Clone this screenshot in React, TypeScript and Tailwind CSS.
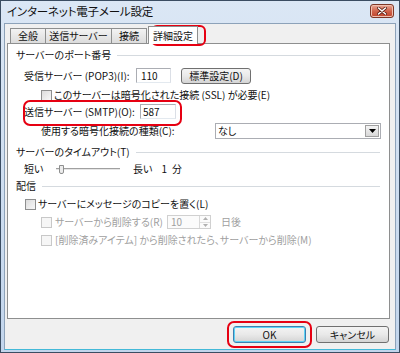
import React from "react";

const font = "[font-family:'Noto_Sans_CJK_JP','Noto_Sans',sans-serif] [font-feature-settings:'palt']";

function Checkbox({ disabled = false }: { disabled?: boolean }) {
  return (
    <span
      className={`inline-block h-[11px] w-[11px] shrink-0 border ${
        disabled
          ? "border-[#c8c8c8] bg-[#f6f6f6]"
          : "border-[#8e8f8f] bg-gradient-to-br from-[#dcdcdc] to-[#f8f8f8]"
      }`}
    />
  );
}

function GroupHeader({ label }: { label: string }) {
  return (
    <div className="flex h-[14px] items-center pl-[8px] pr-[9px]">
      <span className="whitespace-nowrap">{label}</span>
      <div className="ml-[6px] h-px flex-1 bg-[#d5dadf]" />
    </div>
  );
}

function Button({ label, primary = false }: { label: string; primary?: boolean }) {
  return (
    <div
      className={`flex h-[17px] w-[73px] items-center justify-center rounded-[3px] border bg-gradient-to-b from-[#f4f4f4] via-[#e9e9e9] to-[#d4d4d4] ${
        primary ? "border-[#3c7fb1] shadow-[inset_0_0_0_1px_#5fd3f5]" : "border-[#707070]"
      }`}
    >
      {label}
    </div>
  );
}

export default function App() {
  return (
    <div
      className={`relative flex h-[353px] w-[400px] flex-col overflow-hidden border border-[#3b4d62] bg-gradient-to-b from-[#dbe7f5] to-[#c2d5ec] text-[10px] leading-none text-[#111] ${font}`}
    >
      {/* title bar */}
      <div className="flex h-[22px] shrink-0 items-center justify-between pl-[6px] pr-[5px]">
        <span className="text-[11.5px] tracking-[-0.2px]">インターネット電子メール設定</span>
        <div className="mt-[-3px] flex h-[14px] w-[24px] items-center justify-center rounded-[3px] border border-[#7d3626] bg-gradient-to-b from-[#e8a898] via-[#d0644c] to-[#c0432c] shadow-[inset_0_0_0_1px_#f0c0b0]">
          <svg width="10" height="8" viewBox="0 0 10 8">
            <path d="M1.5 1 L8.5 7 M8.5 1 L1.5 7" stroke="#5a1d12" strokeWidth="3" strokeLinecap="round" />
            <path d="M1.5 1 L8.5 7 M8.5 1 L1.5 7" stroke="#ffffff" strokeWidth="1.6" strokeLinecap="round" />
          </svg>
        </div>
      </div>

      {/* client area */}
      <div className="mx-[3px] mb-[2px] flex flex-1 flex-col border border-[#8da2b9] border-b-[#43b9d8] bg-[#f0f0f0]">
        {/* tabs */}
        <div className="flex h-[19px] items-end pl-[5px]">
          <div className="flex h-[15px] w-[36px] items-center justify-center border border-b-0 border-[#8e8f8f] bg-gradient-to-b from-[#f3f3f3] to-[#dcdcdc]">全般</div>
          <div className="flex h-[15px] w-[66px] items-center justify-center border border-b-0 border-l-0 border-[#8e8f8f] bg-gradient-to-b from-[#f3f3f3] to-[#dcdcdc]">送信サーバー</div>
          <div className="flex h-[15px] w-[35px] items-center justify-center border border-b-0 border-l-0 border-[#8e8f8f] bg-gradient-to-b from-[#f3f3f3] to-[#dcdcdc]">接続</div>
          <div className="relative z-10 mb-[-1px] ml-[1px] flex h-[18px] w-[50px] items-center justify-center border border-b-0 border-[#8e8f8f] bg-white">詳細設定</div>
        </div>

        {/* panel */}
        <div className="ml-[2px] mr-[5px] flex h-[276px] flex-col border border-[#8e8f8f] bg-white pt-[4px]">
          <GroupHeader label="サーバーのポート番号" />

          <div className="mt-[6px] flex h-[15px] items-center pl-[16px]">
            <span className="w-[112px] whitespace-nowrap">受信サーバー (POP3)(I):</span>
            <div className="flex h-[15px] w-[35px] items-center border border-[#abadb3] border-b-[#e3e9ef] border-r-[#dbdfe6] pl-[4px]">110</div>
            <div className="ml-[10px] flex h-[16px] w-[70px] items-center justify-center rounded-[3px] border border-[#707070] bg-gradient-to-b from-[#f4f4f4] via-[#e9e9e9] to-[#d4d4d4]">標準設定(D)</div>
          </div>

          <div className="mt-[6px] flex h-[12px] items-center pl-[33px]">
            <Checkbox />
            <span className="ml-[2px] whitespace-nowrap">このサーバーは暗号化された接続 (SSL) が必要(E)</span>
          </div>

          <div className="mt-[3px] flex h-[15px] items-center pl-[16px]">
            <span className="w-[116px] whitespace-nowrap">送信サーバー (SMTP)(O):</span>
            <div className="flex h-[15px] w-[36px] items-center border border-[#abadb3] border-b-[#e3e9ef] border-r-[#dbdfe6] pl-[2px]">587</div>
          </div>

          <div className="mt-[4px] flex h-[16px] items-center pl-[33px]">
            <span className="w-[174px] whitespace-nowrap">使用する暗号化接続の種類(C):</span>
            <div className="flex h-[16px] w-[166px] items-center justify-between border border-[#abadb3] pl-[2px] pr-[1px]">
              <span>なし</span>
              <div className="flex h-[12px] w-[14px] items-center justify-center border border-[#a0a0a0] bg-gradient-to-b from-[#f4f4f4] to-[#d8d8d8]">
                <svg width="7" height="4" viewBox="0 0 7 4">
                  <path d="M0 0 L7 0 L3.5 4 Z" fill="#000" />
                </svg>
              </div>
            </div>
          </div>

          <div className="mt-[6px]">
            <GroupHeader label="サーバーのタイムアウト(T)" />
          </div>

          <div className="mt-[3px] flex h-[14px] items-center pl-[16px]">
            <span className="w-[32px]">短い</span>
            <div className="relative flex h-[14px] w-[64px] items-center">
              <div className="h-[2px] w-full border-t border-[#a0a0a0] bg-[#e6e6e6]" />
              <div className="absolute left-[3px] top-[3px] h-[9px] w-[5px] rounded-b-[2px] border border-[#8e8f8f] bg-[#ececec]" />
            </div>
            <span className="ml-[13px]">長い</span>
            <span className="ml-[9px]">1</span>
            <span className="ml-[5px]">分</span>
          </div>

          <div className="mt-[3px]">
            <GroupHeader label="配信" />
          </div>

          <div className="mt-[4px] flex h-[14px] items-center pl-[17px]">
            <Checkbox />
            <span className="ml-[2px] whitespace-nowrap">サーバーにメッセージのコピーを置く(L)</span>
          </div>

          <div className="mt-[4px] flex h-[14px] items-center pl-[33px] text-[#a0a0a0]">
            <Checkbox disabled />
            <span className="ml-[3px] w-[112px] whitespace-nowrap">サーバーから削除する(R)</span>
            <div className="flex h-[14px] w-[44px] items-center justify-between border border-[#d0d0d0] bg-[#fbfbfb] pl-[3px]">
              <span>10</span>
              <div className="flex h-full w-[11px] flex-col border-l border-[#d8d8d8]">
                <div className="flex flex-1 items-center justify-center">
                  <svg width="5" height="3" viewBox="0 0 5 3"><path d="M0 3 L5 3 L2.5 0 Z" fill="#b0b0b0" /></svg>
                </div>
                <div className="flex flex-1 items-center justify-center border-t border-[#e0e0e0]">
                  <svg width="5" height="3" viewBox="0 0 5 3"><path d="M0 0 L5 0 L2.5 3 Z" fill="#b0b0b0" /></svg>
                </div>
              </div>
            </div>
            <span className="ml-[10px]">日後</span>
          </div>

          <div className="mt-[4px] flex h-[14px] items-center pl-[33px] text-[#a0a0a0]">
            <Checkbox disabled />
            <span className="ml-[3px] whitespace-nowrap">[削除済みアイテム] から削除されたら、サーバーから削除(M)</span>
          </div>
        </div>

        {/* buttons */}
        <div className="mt-[7px] flex justify-end gap-[10px] pr-[6px]">
          <Button label="OK" primary />
          <Button label="キャンセル" />
        </div>
      </div>

      {/* annotation highlights */}
      <div className="pointer-events-none absolute left-[150px] top-[24px] h-[21px] w-[55px] rounded-[6px] border-2 border-[#e60012]" />
      <div className="pointer-events-none absolute left-[22px] top-[99px] h-[26px] w-[159px] rounded-[7px] border-2 border-[#e60012]" />
      <div className="pointer-events-none absolute left-[226px] top-[320px] h-[27px] w-[85px] rounded-[7px] border-2 border-[#e60012]" />
    </div>
  );
}
